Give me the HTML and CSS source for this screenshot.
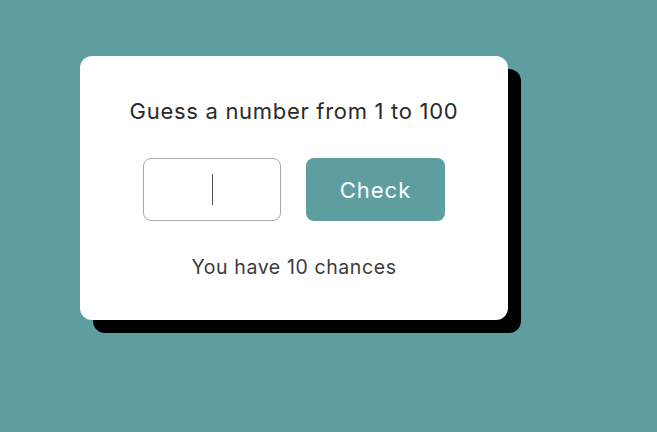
FILE: index.html
```html
<!DOCTYPE html>
<html>
<head>
<meta charset="utf-8">
<link rel="stylesheet" href="styles.css">
</head>
<body>
<div class="card">
  <p class="title">Guess a number from 1 to 100</p>
  <div class="row">
    <div class="field"><span class="caret"></span></div>
    <button class="check">Check</button>
  </div>
  <p class="chances">You have 10 chances</p>
</div>
</body>
</html>
```
FILE: styles.css
```css
html, body {
  margin: 0;
  padding: 0;
}
body {
  background: #5f9ea0;
  width: 657px;
  height: 432px;
  overflow: hidden;
  font-family: Inter, "Open Sans", sans-serif;
  color: #333;
}
.card {
  margin: 56px 0 0 80px;
  width: 428px;
  height: 264px;
  box-sizing: border-box;
  background: #fff;
  border-radius: 12px;
  box-shadow: 13px 13px 0 #000;
  padding-top: 40px;
  display: flex;
  flex-direction: column;
  align-items: center;
}
.title {
  margin: 0;
  font-size: 22px;
  line-height: 30px;
  letter-spacing: 0.7px;
  color: #2a2a2a;
}
.row {
  margin-top: 32px;
  display: flex;
  gap: 25px;
}
.field {
  width: 138px;
  height: 63px;
  box-sizing: border-box;
  border: 1px solid #aaa;
  border-radius: 8px;
  display: flex;
  align-items: center;
  justify-content: center;
}
.caret {
  width: 1px;
  height: 31px;
  background: #555;
}
.check {
  width: 139px;
  height: 63px;
  border: none;
  border-radius: 8px;
  background: #5f9ea0;
  color: #fff;
  font-family: Inter, "Open Sans", sans-serif;
  font-size: 22px;
  letter-spacing: 1px;
  padding: 0;
}
.chances {
  margin: 33px 0 0;
  font-size: 19.5px;
  line-height: 26px;
  letter-spacing: 0.6px;
  color: #3a3a3a;
}
```
